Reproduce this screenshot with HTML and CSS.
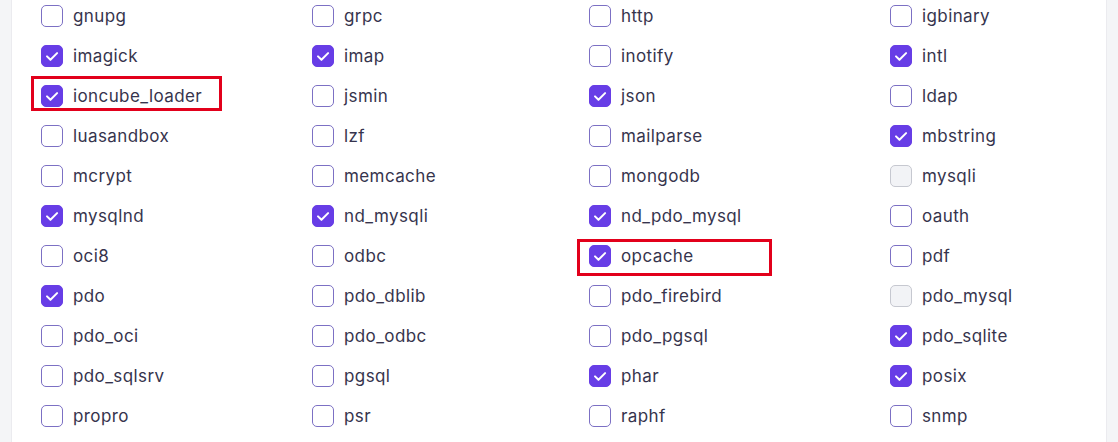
FILE: index.html
```html
<!DOCTYPE html>
<html lang="en">
<head>
    <meta charset="UTF-8">
    <meta name="viewport" content="width=device-width, initial-scale=1.0">
    <title>PHP Extensions</title>
    <link rel="stylesheet" href="styles.css">
</head>
<body>

<div class="ext-card">
    <div class="ext-grid">
        <label class="ext"><span class="box"></span>gnupg</label>
        <label class="ext"><span class="box"></span>grpc</label>
        <label class="ext"><span class="box"></span>http</label>
        <label class="ext"><span class="box"></span>igbinary</label>

        <label class="ext"><span class="box checked"><svg viewBox="0 0 22 22"><path d="M5.5 11.4l3.8 3.8L16.6 7.8"/></svg></span>imagick</label>
        <label class="ext"><span class="box checked"><svg viewBox="0 0 22 22"><path d="M5.5 11.4l3.8 3.8L16.6 7.8"/></svg></span>imap</label>
        <label class="ext"><span class="box"></span>inotify</label>
        <label class="ext"><span class="box checked"><svg viewBox="0 0 22 22"><path d="M5.5 11.4l3.8 3.8L16.6 7.8"/></svg></span>intl</label>

        <label class="ext marked marked-a"><span class="box checked"><svg viewBox="0 0 22 22"><path d="M5.5 11.4l3.8 3.8L16.6 7.8"/></svg></span>ioncube_loader</label>
        <label class="ext"><span class="box"></span>jsmin</label>
        <label class="ext"><span class="box checked"><svg viewBox="0 0 22 22"><path d="M5.5 11.4l3.8 3.8L16.6 7.8"/></svg></span>json</label>
        <label class="ext"><span class="box"></span>ldap</label>

        <label class="ext"><span class="box"></span>luasandbox</label>
        <label class="ext"><span class="box"></span>lzf</label>
        <label class="ext"><span class="box"></span>mailparse</label>
        <label class="ext"><span class="box checked"><svg viewBox="0 0 22 22"><path d="M5.5 11.4l3.8 3.8L16.6 7.8"/></svg></span>mbstring</label>

        <label class="ext"><span class="box"></span>mcrypt</label>
        <label class="ext"><span class="box"></span>memcache</label>
        <label class="ext"><span class="box"></span>mongodb</label>
        <label class="ext"><span class="box disabled"></span>mysqli</label>

        <label class="ext"><span class="box checked"><svg viewBox="0 0 22 22"><path d="M5.5 11.4l3.8 3.8L16.6 7.8"/></svg></span>mysqlnd</label>
        <label class="ext"><span class="box checked"><svg viewBox="0 0 22 22"><path d="M5.5 11.4l3.8 3.8L16.6 7.8"/></svg></span>nd_mysqli</label>
        <label class="ext"><span class="box checked"><svg viewBox="0 0 22 22"><path d="M5.5 11.4l3.8 3.8L16.6 7.8"/></svg></span>nd_pdo_mysql</label>
        <label class="ext"><span class="box"></span>oauth</label>

        <label class="ext"><span class="box"></span>oci8</label>
        <label class="ext"><span class="box"></span>odbc</label>
        <label class="ext marked marked-b"><span class="box checked"><svg viewBox="0 0 22 22"><path d="M5.5 11.4l3.8 3.8L16.6 7.8"/></svg></span>opcache</label>
        <label class="ext"><span class="box"></span>pdf</label>

        <label class="ext"><span class="box checked"><svg viewBox="0 0 22 22"><path d="M5.5 11.4l3.8 3.8L16.6 7.8"/></svg></span>pdo</label>
        <label class="ext"><span class="box"></span>pdo_dblib</label>
        <label class="ext"><span class="box"></span>pdo_firebird</label>
        <label class="ext"><span class="box disabled"></span>pdo_mysql</label>

        <label class="ext"><span class="box"></span>pdo_oci</label>
        <label class="ext"><span class="box"></span>pdo_odbc</label>
        <label class="ext"><span class="box"></span>pdo_pgsql</label>
        <label class="ext"><span class="box checked"><svg viewBox="0 0 22 22"><path d="M5.5 11.4l3.8 3.8L16.6 7.8"/></svg></span>pdo_sqlite</label>

        <label class="ext"><span class="box"></span>pdo_sqlsrv</label>
        <label class="ext"><span class="box"></span>pgsql</label>
        <label class="ext"><span class="box checked"><svg viewBox="0 0 22 22"><path d="M5.5 11.4l3.8 3.8L16.6 7.8"/></svg></span>phar</label>
        <label class="ext"><span class="box checked"><svg viewBox="0 0 22 22"><path d="M5.5 11.4l3.8 3.8L16.6 7.8"/></svg></span>posix</label>

        <label class="ext"><span class="box"></span>propro</label>
        <label class="ext"><span class="box"></span>psr</label>
        <label class="ext"><span class="box"></span>raphf</label>
        <label class="ext"><span class="box"></span>snmp</label>
    </div>
</div>

</body>
</html>
```

FILE: styles.css
```css
/* Lista de extensões PHP */
body {
    background-color: #f4f5f7;
    font-family: Inter, "Noto Sans", sans-serif;
    margin: 0;
    padding: 0 11px 0 11px;
    overflow: hidden;
}

.ext-card {
    background-color: white;
    border-left: 1px solid #ebebef;
    border-right: 1px solid #ebebef;
    margin-top: -4px;
    padding: 0 0 20px 29px;
}

.ext-grid {
    display: grid;
    grid-template-columns: 271px 277px 301px 1fr;
    grid-auto-rows: 40px;
}

.ext {
    position: relative;
    display: flex;
    align-items: center;
    gap: 10px;
    font-size: 17px;
    color: #36344d;
    letter-spacing: 0.4px;
}

.box {
    width: 22px;
    height: 22px;
    box-sizing: border-box;
    border: 1.5px solid #7c70c4;
    border-radius: 5px;
    background-color: white;
    flex-shrink: 0;
    display: flex;
    align-items: center;
    justify-content: center;
}

.box.checked {
    background-color: #673de6;
    border-color: #673de6;
}

.box.checked svg {
    width: 22px;
    height: 22px;
    fill: none;
    stroke: white;
    stroke-width: 2.2;
    stroke-linecap: round;
    stroke-linejoin: round;
}

.box.disabled {
    background-color: #f2f3f6;
    border-color: #c6c8d0;
}

/* destaque vermelho */
.marked::after {
    content: "";
    position: absolute;
    border: 3px solid #e2001b;
}

.marked-a::after {
    left: -10px;
    top: 0px;
    width: 185px;
    height: 29px;
}

.marked-b::after {
    left: -12px;
    top: 3px;
    width: 189px;
    height: 31px;
}
```
